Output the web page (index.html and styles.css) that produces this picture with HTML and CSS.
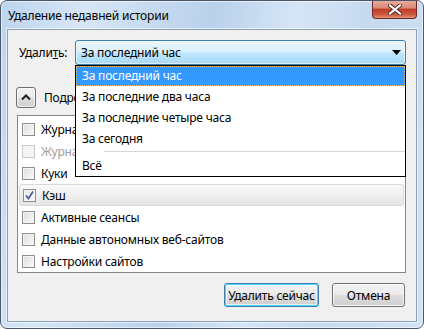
FILE: index.html
```html
<!DOCTYPE html>
<html lang="ru">
<head>
    <meta charset="UTF-8">
    <title>Удаление недавней истории</title>
    <link rel="stylesheet" href="styles.css">
</head>
<body>
    <div class="window">
        <div class="titlebar">
            <span class="title">Удаление недавней истории</span>
            <div class="close-btn">
                <svg width="14" height="11" viewBox="0 0 14 11">
                    <path d="M2 1.5 L12 9.5 M12 1.5 L2 9.5" stroke="#4a2020" stroke-width="4" stroke-linecap="square"/>
                    <path d="M2 1.5 L12 9.5 M12 1.5 L2 9.5" stroke="#ffffff" stroke-width="2.2" stroke-linecap="square"/>
                </svg>
            </div>
        </div>
        <div class="client">
            <div class="range-row">
                <label class="range-label">Удали<u>т</u>ь:</label>
                <div class="select">
                    <span>За последний час</span>
                    <svg class="select-arrow" width="9" height="5" viewBox="0 0 9 5"><path d="M0 0 H9 L4.5 5 Z" fill="#000"/></svg>
                </div>
            </div>
            <div class="details-row">
                <div class="expander">
                    <svg width="10" height="7" viewBox="0 0 10 7"><path d="M1 5.5 L5 1.5 L9 5.5" fill="none" stroke="#1e1e1e" stroke-width="2"/></svg>
                </div>
                <span>Подробности</span>
            </div>
            <div class="item-list">
                <div class="item"><span class="check"></span>Журнал посещений и загрузок</div>
                <div class="item disabled"><span class="check"></span>Журнал форм и поиска</div>
                <div class="item"><span class="check"></span>Куки</div>
                <div class="item selected"><span class="check checked"><svg width="9" height="9" viewBox="0 0 9 9"><path d="M1 4.5 L3.5 7.5 L8 0.5" fill="none" stroke="#4b61a0" stroke-width="1.8"/></svg></span>Кэш</div>
                <div class="item"><span class="check"></span>Активные сеансы</div>
                <div class="item"><span class="check"></span>Данные автономных веб-сайтов</div>
                <div class="item"><span class="check"></span>Настройки сайтов</div>
            </div>
            <div class="buttons">
                <button class="btn default">Удалить сейчас</button>
                <button class="btn">Отмена</button>
            </div>

            <!-- open dropdown, drawn over the dialog -->
            <ul class="popup">
                <li class="active">За последний час</li>
                <li>За последние два часа</li>
                <li>За последние четыре часа</li>
                <li>За сегодня</li>
                <li class="separator"></li>
                <li>Всё</li>
            </ul>
        </div>
    </div>
</body>
</html>
```

FILE: styles.css
```css
body {
    margin: 0;
    padding: 0;
    background-color: #fff;
    font-family: "Noto Sans", "Open Sans", sans-serif;
    font-size: 12px;
    letter-spacing: -0.2px;
    color: #000;
}
.window {
    width: 424px;
    height: 329px;
    box-sizing: border-box;
    border: 1px solid #4b5667;
    border-radius: 7px;
    padding: 0 6px 6px 6px;
    display: flex;
    flex-direction: column;
    background: linear-gradient(100deg, #bcd4ee 0%, #d7e6f6 18%, #c6daf0 32%, #b9d1eb 45%, #d6e5f6 62%, #c5d9ef 78%, #d2e2f3 100%);
    box-shadow: inset 0 0 0 1px rgba(255, 255, 255, 0.55);
}
.titlebar {
    height: 28px;
    display: flex;
    align-items: flex-start;
}
.title {
    padding: 7px 0 0 1px;
    color: #000;
    line-height: 16px;
}
.close-btn {
    margin-left: auto;
    width: 45px;
    height: 18px;
    box-sizing: border-box;
    border: 1px solid #6b2a22;
    border-top: none;
    border-radius: 0 0 4px 4px;
    background: linear-gradient(#e9a99b 0%, #d98a78 40%, #c23e25 50%, #cc5a40 80%, #e3927a 100%);
    display: flex;
    align-items: center;
    justify-content: center;
}
.client {
    position: relative;
    flex: 1;
    background-color: #f0f0f0;
    border: 1px solid #8da0b9;
    box-shadow: 0 0 0 1px rgba(255, 255, 255, 0.6);
    display: flex;
    flex-direction: column;
}
.range-row {
    display: flex;
    align-items: center;
    margin-top: 10px;
    height: 25px;
}
.range-label {
    width: 56px;
    padding-left: 11px;
    box-sizing: content-box;
}
.range-label u {
    text-decoration: underline;
}
.select {
    width: 331px;
    height: 25px;
    box-sizing: border-box;
    border: 1px solid #3c7fb1;
    border-radius: 3px;
    background: linear-gradient(#eaf6fd 0%, #d9f0fc 48%, #bee6fd 52%, #a7d9f5 100%);
    display: flex;
    align-items: center;
    padding-left: 5px;
    box-shadow: inset 0 0 0 1px rgba(255, 255, 255, 0.6);
}
.select-arrow {
    margin-left: auto;
    margin-right: 4px;
}
.details-row {
    display: flex;
    align-items: center;
    margin-top: 22px;
    height: 21px;
    padding-left: 8px;
}
.expander {
    width: 20px;
    height: 21px;
    box-sizing: border-box;
    border: 1px solid #707070;
    border-radius: 3px;
    background: linear-gradient(#f2f2f2 0%, #ebebeb 48%, #dddddd 52%, #cfcfcf 100%);
    box-shadow: inset 0 0 0 1px rgba(255, 255, 255, 0.7);
    display: flex;
    align-items: center;
    justify-content: center;
    margin-right: 8px;
}
.item-list {
    margin: 7px 0 0 9px;
    width: 389px;
    height: 158px;
    box-sizing: border-box;
    border: 1px solid #828790;
    background-color: #fff;
    padding-top: 2px;
}
.item {
    height: 22px;
    box-sizing: border-box;
    display: flex;
    align-items: center;
    padding-left: 4px;
    margin: 0 1px 0 0;
}
.item.disabled {
    color: #a0a0a0;
}
.item.selected {
    margin: 0 1px;
    padding-left: 3px;
    border: 1px solid #d9d9d9;
    border-radius: 3px;
    background: linear-gradient(#fafafa, #e5e5e5);
}
.check {
    width: 13px;
    height: 13px;
    box-sizing: border-box;
    border: 1px solid #8e8f8f;
    background: linear-gradient(135deg, #dcdcdc, #fbfbfb);
    box-shadow: inset 0 0 0 1px #f4f4f4;
    margin-right: 6px;
    display: flex;
    align-items: center;
    justify-content: center;
}
.item.disabled .check {
    border-color: #c8c8c8;
    background: #f4f4f4;
}
.check.checked {
    background: linear-gradient(135deg, #e4e4e4, #fdfdfd);
}
.buttons {
    display: flex;
    justify-content: flex-end;
    gap: 13px;
    margin-top: 10px;
    padding-right: 11px;
}
.btn {
    height: 24px;
    box-sizing: border-box;
    font-family: inherit;
    font-size: 12px;
    letter-spacing: inherit;
    color: #000;
    border: 1px solid #707070;
    border-radius: 3px;
    background: linear-gradient(#f2f2f2 0%, #ebebeb 48%, #dddddd 52%, #cfcfcf 100%);
    box-shadow: inset 0 0 0 1px rgba(255, 255, 255, 0.8);
    padding: 0;
    width: 73px;
}
.btn.default {
    width: 95px;
    border-color: #3c7fb1;
    box-shadow: inset 0 0 0 1px #48d8fb, inset 0 0 0 2px rgba(255, 255, 255, 0.6);
}
.popup {
    position: absolute;
    left: 67px;
    top: 35px;
    width: 331px;
    margin: 0;
    padding: 0;
    list-style: none;
    box-sizing: border-box;
    border: 1px solid #000;
    background-color: #fff;
}
.popup li {
    height: 21px;
    line-height: 21px;
    padding-left: 6px;
}
.popup li.active {
    height: 20px;
    line-height: 20px;
    background-color: #3399ff;
    color: #fff;
    outline: 1px dotted #f3c566;
    outline-offset: -1px;
}
.popup li.separator {
    height: 6px;
    margin-left: 28px;
    padding: 0;
    background: linear-gradient(transparent 2px, #d7d7d7 2px, #d7d7d7 3px, transparent 3px);
}
```
